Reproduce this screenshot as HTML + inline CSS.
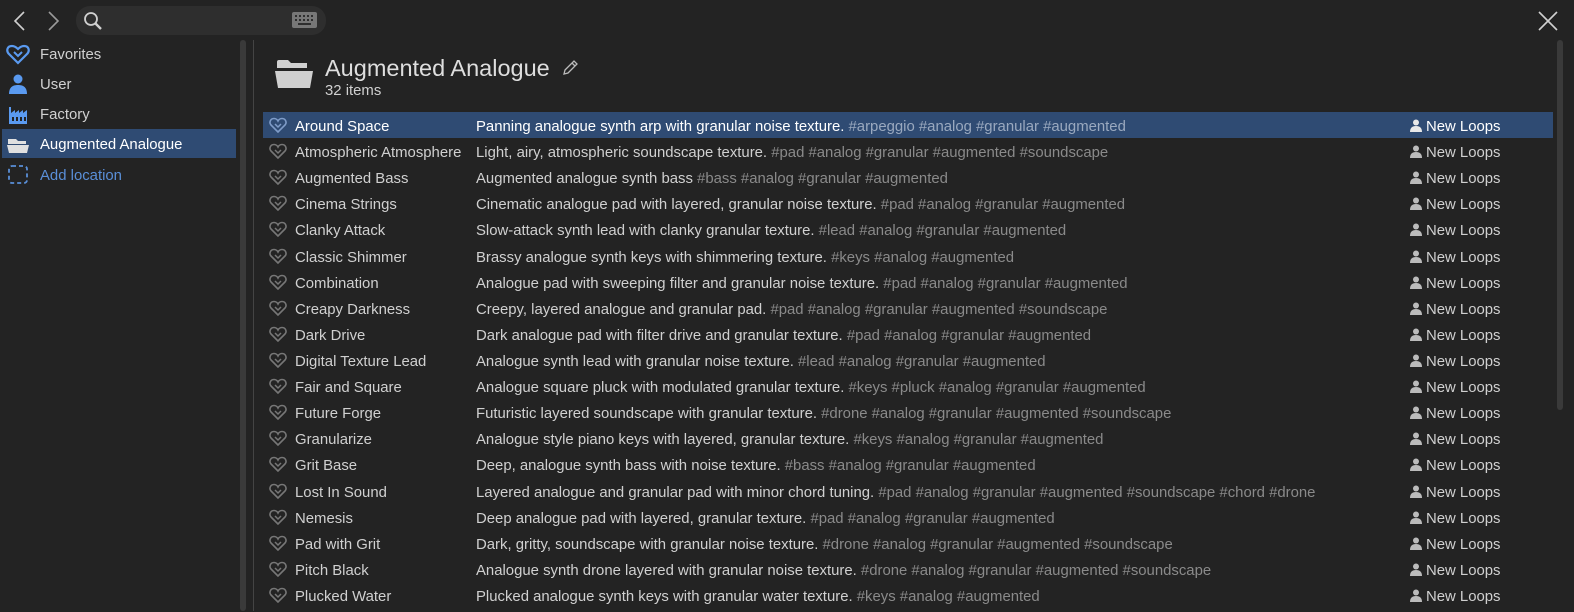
<!DOCTYPE html>
<html><head><meta charset="utf-8"><style>
*{margin:0;padding:0;box-sizing:border-box}
body{width:1574px;height:611px;background:#232323;font-family:"Liberation Sans",sans-serif;color:#d0d0d0;position:relative;overflow:hidden;font-size:14.9px}
.abs{position:absolute}
.search{left:76px;top:6px;width:250px;height:29px;background:#2e2e2e;border-radius:14px}
.si{position:absolute;left:2px;width:234px;height:29px;line-height:32px;padding-left:38px}
.si svg{position:absolute;left:4px;top:4px}
.row{position:absolute;left:263px;width:1290px;height:26px;line-height:30px;white-space:nowrap}
.row.sel{background:#2f4b73;color:#fff}
.row .h{position:absolute;left:6px;top:5px}
.row .n{position:absolute}
.row .d{position:absolute}
.row .t{color:#8a8a8a}
.row.sel .t{color:#9aa9bf}
.row .u{position:absolute;top:7px}
.row .l{position:absolute}
</style></head><body>
<svg class="abs" style="left:10px;top:10px" width="20" height="22"><path d="M14 2 L5 11 L14 20" stroke="#cfcfcf" stroke-width="1.6" fill="none"/></svg>
<svg class="abs" style="left:44px;top:10px" width="20" height="22"><path d="M5 2 L14 11 L5 20" stroke="#9a9a9a" stroke-width="1.6" fill="none"/></svg>
<div class="abs search"></div>
<svg class="abs" style="left:83px;top:11px" width="20" height="20"><circle cx="8" cy="8" r="6" stroke="#d0d0d0" stroke-width="1.8" fill="none"/><path d="M12.5 12.5 L18 18" stroke="#d0d0d0" stroke-width="2.4"/></svg>
<svg class="abs" style="left:292px;top:12px" width="25" height="16"><rect x="0" y="0" width="25" height="16" rx="2" fill="#777"/><g fill="#2e2e2e"><rect x="3" y="3" width="2" height="2"/><rect x="7" y="3" width="2" height="2"/><rect x="11" y="3" width="2" height="2"/><rect x="15" y="3" width="2" height="2"/><rect x="19" y="3" width="2" height="2"/><rect x="3" y="7" width="2" height="2"/><rect x="7" y="7" width="2" height="2"/><rect x="11" y="7" width="2" height="2"/><rect x="15" y="7" width="2" height="2"/><rect x="19" y="7" width="2" height="2"/><rect x="6" y="11" width="13" height="2"/></g></svg>
<svg class="abs" style="left:1537px;top:10px" width="22" height="22"><path d="M2 2 L20 20 M20 2 L2 20" stroke="#d0d0d0" stroke-width="1.6"/></svg>
<div class="abs" style="left:240px;top:40px;width:6px;height:571px;background:#3a3a3a;border-radius:3px"></div>
<div class="abs" style="left:253px;top:40px;width:1px;height:571px;background:#444"></div>
<div class="abs" style="left:1557px;top:40px;width:6px;height:370px;background:#3a3a3a;border-radius:3px"></div>

<div class="si" style="top:39px"><svg width="24" height="22"><path d="M12 20 L3 11 C0 8 1 3 6 3 C9 3 11 5 12 6 C13 5 15 3 18 3 C23 3 24 8 21 11 Z" stroke="#5a9af0" stroke-width="2.2" fill="none"/><path d="M8 9 L12 13 L16 9" stroke="#5a9af0" stroke-width="2" fill="none"/></svg>Favorites</div>
<div class="si" style="top:69px"><svg width="24" height="22"><circle cx="12" cy="6" r="4.5" fill="#5a9af0"/><path d="M3 21 C3 14 7 12 12 12 C17 12 21 14 21 21 Z" fill="#5a9af0"/></svg>User</div>
<div class="si" style="top:99px"><svg width="24" height="22"><path d="M3 21 V4 H5 V10 L9 7 V10 L13 7 V10 L17 7 V10 L21 7 V21 Z" fill="#5a9af0"/><g fill="#232323"><rect x="6" y="14" width="2" height="4"/><rect x="10" y="14" width="2" height="4"/><rect x="14" y="14" width="2" height="4"/><rect x="18" y="14" width="2" height="4"/></g></svg>Factory</div>
<div class="si" style="top:129px;background:#2f4b73;color:#fff"><svg width="24" height="22"><path d="M2 6 H10 L12 8 H20 V11 H2 Z" fill="#e0e0e0"/><path d="M1 12 H23 L21 20 H3 Z" fill="#e0e0e0"/></svg>Augmented Analogue</div>
<div class="si" style="top:160px;color:#5a8fd8"><svg width="24" height="22"><rect x="3" y="2" width="18" height="17" rx="3" stroke="#5a8fd8" stroke-width="1.8" fill="none" stroke-dasharray="4 3"/></svg>Add location</div>

<svg class="abs" style="left:274px;top:58px" width="40" height="32"><path d="M3 4 Q3 2 5 2 H14 L17 5 H33 V10 H3 Z" fill="#d0d0d0"/><path d="M1 13 H39 L36 30 H4 Z" fill="#d0d0d0"/></svg>
<div class="abs" style="left:325px;top:55px;font-size:23.5px;color:#dedede">Augmented Analogue</div>
<svg class="abs" style="left:561px;top:59px" width="18" height="18"><path d="M3 15 L4 11 L13 2 L16 5 L7 14 Z M11 4 L14 7" stroke="#bbb" stroke-width="1.3" fill="none"/></svg>
<div class="abs" style="left:325px;top:83px;font-size:14.9px;color:#d0d0d0">32 items</div>

<div id="rows"></div>
<script>
var d=[["Around Space","Panning analogue synth arp with granular noise texture.","#arpeggio #analog #granular #augmented"],
["Atmospheric Atmosphere","Light, airy, atmospheric soundscape texture.","#pad #analog #granular #augmented #soundscape"],
["Augmented Bass","Augmented analogue synth bass","#bass #analog #granular #augmented"],
["Cinema Strings","Cinematic analogue pad with layered, granular noise texture.","#pad #analog #granular #augmented"],
["Clanky Attack","Slow-attack synth lead with clanky granular texture.","#lead #analog #granular #augmented"],
["Classic Shimmer","Brassy analogue synth keys with shimmering texture.","#keys #analog #augmented"],
["Combination","Analogue pad with sweeping filter and granular noise texture.","#pad #analog #granular #augmented"],
["Creapy Darkness","Creepy, layered analogue and granular pad.","#pad #analog #granular #augmented #soundscape"],
["Dark Drive","Dark analogue pad with filter drive and granular texture.","#pad #analog #granular #augmented"],
["Digital Texture Lead","Analogue synth lead with granular noise texture.","#lead #analog #granular #augmented"],
["Fair and Square","Analogue square pluck with modulated granular texture.","#keys #pluck #analog #granular #augmented"],
["Future Forge","Futuristic layered soundscape with granular texture.","#drone #analog #granular #augmented #soundscape"],
["Granularize","Analogue style piano keys with layered, granular texture.","#keys #analog #granular #augmented"],
["Grit Base","Deep, analogue synth bass with noise texture.","#bass #analog #granular #augmented"],
["Lost In Sound","Layered analogue and granular pad with minor chord tuning.","#pad #analog #granular #augmented #soundscape #chord #drone"],
["Nemesis","Deep analogue pad with layered, granular texture.","#pad #analog #granular #augmented"],
["Pad with Grit","Dark, gritty, soundscape with granular noise texture.","#drone #analog #granular #augmented #soundscape"],
["Pitch Black","Analogue synth drone layered with granular noise texture.","#drone #analog #granular #augmented #soundscape"],
["Plucked Water","Plucked analogue synth keys with granular water texture.","#keys #analog #augmented"]];
var h='';
d.forEach(function(r,i){var y=112+i*26.11;var hc=i==0?'#7f9cc8':'#777';var uc=i==0?'#e8e8e8':'#bbb';
h+='<div class="row'+(i==0?' sel':'')+'" style="top:'+y+'px"><svg class="h" width="18" height="16"><path d="M9 15 L2 8 C0 6 1 1.5 5 1.5 C7 1.5 8.5 3 9 4 C9.5 3 11 1.5 13 1.5 C17 1.5 18 6 16 8 Z" stroke="'+hc+'" stroke-width="1.6" fill="none"/><path d="M6 7 L9 10 L12 7" stroke="'+hc+'" stroke-width="1.5" fill="none"/></svg><span class="n" style="left:32px">'+r[0]+'</span><span class="d" style="left:213px">'+r[1]+' <span class="t">'+r[2]+'</span></span><svg class="u" style="left:1147px" width="12" height="13"><circle cx="6" cy="3.5" r="3" fill="'+uc+'"/><path d="M0 13 C0 9 2 7 6 7 C10 7 12 9 12 13 Z" fill="'+uc+'"/></svg><span class="l" style="left:1163px">New Loops</span></div>';});
document.getElementById('rows').innerHTML=h;
</script>
</body></html>
